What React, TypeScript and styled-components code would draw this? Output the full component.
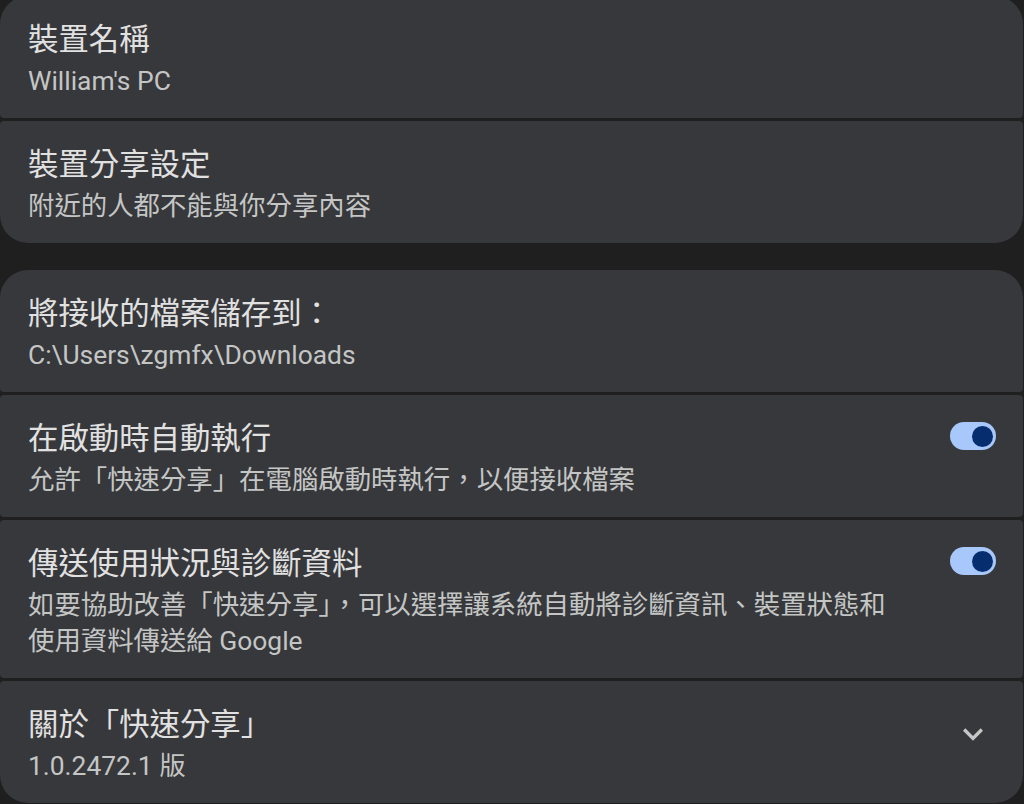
import React, { useEffect } from "react";
import styled, { createGlobalStyle } from "styled-components";

const GlobalStyle = createGlobalStyle`
  html, body {
    margin: 0;
    padding: 0;
    background: #1f1f1f;
  }
  body {
    font-family: Roboto, "Noto Sans CJK TC", "Noto Sans", sans-serif;
    overflow: hidden;
  }
`;

const Page = styled.div`
  display: flex;
  flex-direction: column;
  gap: 27px;
  margin-top: -4px;
  width: 1023px;
  height: 808px;
  overflow: hidden;
`;

const Group = styled.div`
  display: flex;
  flex-direction: column;
  gap: 3px;
  border-radius: 28px;
  overflow: hidden;
`;

const Row = styled.div`
  display: flex;
  align-items: flex-start;
  gap: 44px;
  background: #37383b;
  border-radius: 4px;
  padding: 24px 27px 19px 28px;
`;

const Texts = styled.div`
  flex: 1;
  display: flex;
  flex-direction: column;
  gap: 3px;
  min-width: 0;
`;

const Title = styled.div`
  font-size: 30.4px;
  line-height: 40px;
  color: #e1e1e1;
`;

const Sub = styled.div`
  font-size: 26.4px;
  line-height: 36px;
  color: #c4c6c5;
`;

const Track = styled.div<{ $on: boolean }>`
  flex: none;
  width: 46px;
  height: 28px;
  margin-top: 3px;
  border-radius: 14px;
  background: ${(p) => (p.$on ? "#a8c7fa" : "#8e918f")};
  display: flex;
  align-items: center;
  justify-content: ${(p) => (p.$on ? "flex-end" : "flex-start")};
  padding: 0 3px;
  box-sizing: border-box;
`;

const Thumb = styled.div`
  width: 21px;
  height: 21px;
  border-radius: 50%;
  background: #062e6f;
`;

const Chevron = styled.div`
  flex: none;
  width: 40px;
  height: 40px;
  margin: 9px 3px 0 0;
  color: #c4c7c5;
`;

const Toggle = ({ on }: { on: boolean }) => (
  <Track $on={on}>
    <Thumb />
  </Track>
);

const App: React.FC = () => {
  useEffect(() => {
    document.documentElement.lang = "zh-Hant-TW";
  }, []);

  return (
    <>
      <GlobalStyle />
      <Page lang="zh-Hant-TW">
        <Group>
          <Row>
            <Texts>
              <Title>裝置名稱</Title>
              <Sub>William's PC</Sub>
            </Texts>
          </Row>
          <Row>
            <Texts>
              <Title>裝置分享設定</Title>
              <Sub>附近的人都不能與你分享內容</Sub>
            </Texts>
          </Row>
        </Group>
        <Group>
          <Row>
            <Texts>
              <Title>將接收的檔案儲存到：</Title>
              <Sub>C:\Users\zgmfx\Downloads</Sub>
            </Texts>
          </Row>
          <Row>
            <Texts>
              <Title>在啟動時自動執行</Title>
              <Sub>允許「快速分享」在電腦啟動時執行，以便接收檔案</Sub>
            </Texts>
            <Toggle on />
          </Row>
          <Row>
            <Texts>
              <Title>傳送使用狀況與診斷資料</Title>
              <Sub>如要協助改善「快速分享」，可以選擇讓系統自動將診斷資訊、裝置狀態和使用資料傳送給 Google</Sub>
            </Texts>
            <Toggle on />
          </Row>
          <Row>
            <Texts>
              <Title>關於「快速分享」</Title>
              <Sub>1.0.2472.1 版</Sub>
            </Texts>
            <Chevron>
              <svg width="40" height="40" viewBox="0 0 24 24" fill="currentColor">
                <path d="M16.59 8.59L12 13.17 7.41 8.59 6 10l6 6 6-6z" />
              </svg>
            </Chevron>
          </Row>
        </Group>
      </Page>
    </>
  );
};

export default App;
